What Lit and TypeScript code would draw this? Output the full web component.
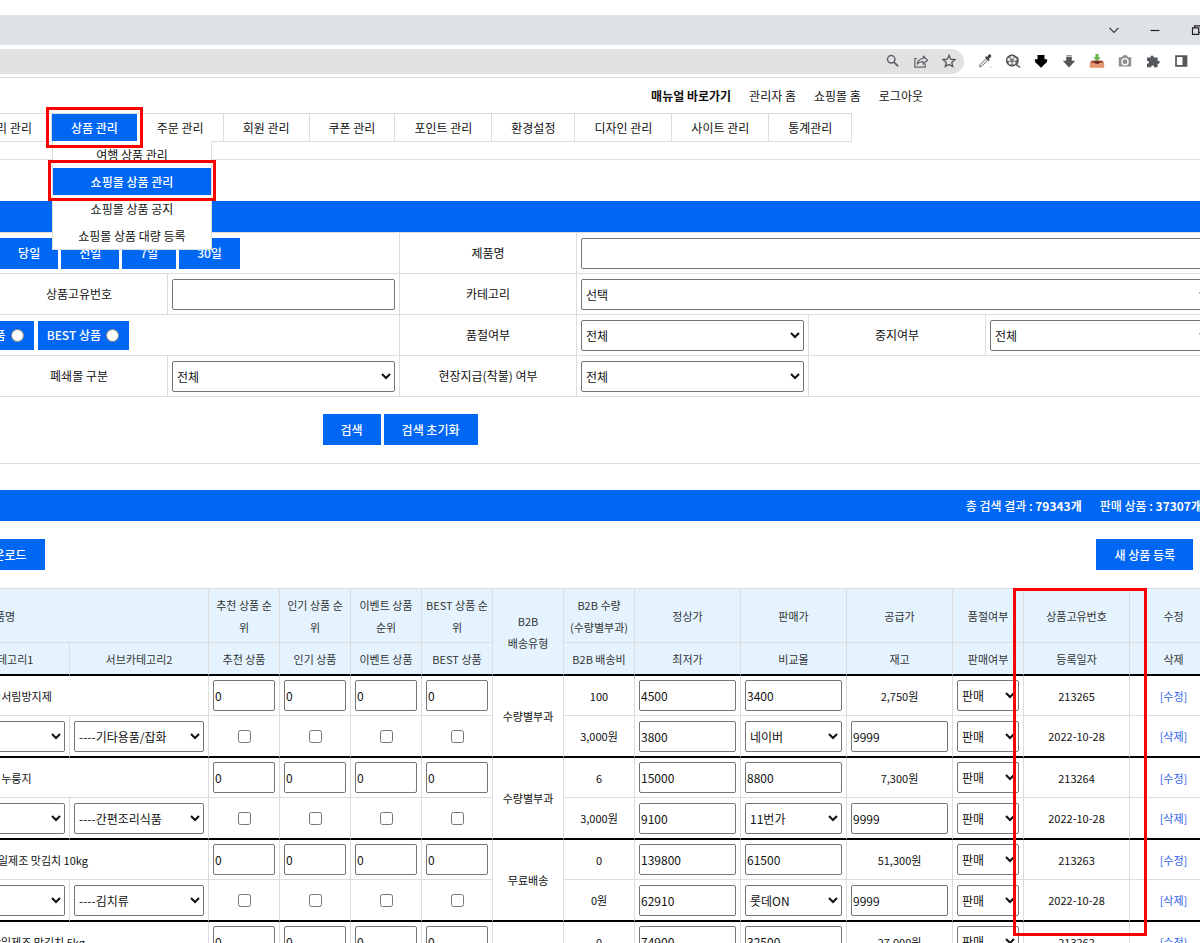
import { LitElement, html, css, svg, nothing } from "lit";
import { customElement } from "lit/decorators.js";

interface Product {
  name: string;
  sub: string;
  delivery: string;
  qty: string;
  fee: string;
  price: string;
  lowest: string;
  sale: string;
  mall: string;
  supply: string;
  stock: string;
  id: string;
  date: string;
}

const products: Product[] = [
  { name: "자동차용 김서림방지제", sub: "----기타용품/잡화", delivery: "수량별부과", qty: "100", fee: "3,000원", price: "4500", lowest: "3800", sale: "3400", mall: "네이버", supply: "2,750원", stock: "9999", id: "213265", date: "2022-10-28" },
  { name: "구수한 누룽지", sub: "----간편조리식품", delivery: "수량별부과", qty: "6", fee: "3,000원", price: "15000", lowest: "9100", sale: "8800", mall: "11번가", supply: "7,300원", stock: "9999", id: "213264", date: "2022-10-28" },
  { name: "국내산 절임배추 당일제조 맛김치 10kg", sub: "----김치류", delivery: "무료배송", qty: "0", fee: "0원", price: "139800", lowest: "62910", sale: "61500", mall: "롯데ON", supply: "51,300원", stock: "9999", id: "213263", date: "2022-10-28" },
  { name: "국내산 절임배추 당일제조 맛김치 5kg", sub: "----김치류", delivery: "무료배송", qty: "0", fee: "0원", price: "74900", lowest: "33700", sale: "32500", mall: "롯데ON", supply: "27,000원", stock: "9999", id: "213262", date: "2022-10-28" },
];

const ranks = ["추천 상품", "인기 상품", "이벤트 상품", "BEST 상품"];

const menu = ["카테고리 관리", "상품 관리", "주문 관리", "회원 관리", "쿠폰 관리", "포인트 관리", "환경설정", "디자인 관리", "사이트 관리", "통계관리"];
const submenu = ["여행 상품 관리", "쇼핑몰 상품 관리", "쇼핑몰 상품 공지", "쇼핑몰 상품 대량 등록"];

const icons = {
  search: svg`<g fill="none" stroke="#5f6368" stroke-width="1.5"><circle cx="7.2" cy="7.3" r="3.7"/><path d="M10 10.2l4.2 4.2" stroke-width="1.8"/></g>`,
  share: svg`<g fill="none" stroke="#5f6368" stroke-width="1.2"><path d="M5 6.5H2.8v8.7h10.4v-3.4"/><path d="M5.2 12c.5-3.600 2.600-5.300 6-5.500V4l4.300 4.200-4.300 4V9.700c-2.600-.1-4.500.5-6 2.300z" stroke-linejoin="round"/></g>`,
  star: svg`<path d="M9 3.300l1.750 3.900 4.200.4-3.200 2.800.95 4.150L9 12.400l-3.700 2.150.95-4.150-3.200-2.800 4.200-.4z" fill="none" stroke="#4f5358" stroke-width="1.300"/>`,
  dropper: svg`<path d="M3.500 14.800l.5-2.200 6-6 1.700 1.700-6 6z" fill="#e8e8e8" stroke="#777" stroke-width="1"/><path d="M9 5.300l1-1 1.200.6 1.500-2.200c1-1.200 3.400.8 2.300 2.200l-2.100 1.700.6 1.300-1 1z" fill="#3c4043"/><rect x="14.500" y="14.800" width="1" height="1" fill="#888"/>`,
  film: svg`<circle cx="8" cy="8.500" r="6" fill="#777"/><circle cx="8" cy="8.500" r="5.400" fill="none" stroke="#444"/><g fill="#eee"><circle cx="8" cy="5.200" r="1.500"/><circle cx="11" cy="7.300" r="1.500"/><circle cx="10" cy="11" r="1.500"/><circle cx="6.200" cy="11" r="1.500"/><circle cx="4.900" cy="7.400" r="1.500"/></g><path d="M13 5c1.500 2 1.500 5-.5 8l3.700 2.300" fill="none" stroke="#666" stroke-width="1.500"/>`,
  heavyDown: svg`<path d="M5.500 3h7v4.200H15.200L15 10l-6 5.800L3 10 2.800 7.200h2.700z" fill="#000"/>`,
  down: svg`<path d="M6.200 3h5.600v1.200H6.200z" fill="#999"/><path d="M6.200 4.700h5.600v4h3.400L9 15.400 2.800 8.700h3.400z" fill="#555"/>`,
  tray: svg`<path d="M7.500 2h3v3.200h2.300L9 9.200 5.200 5.200h2.300z" fill="#67b346"/><path d="M3.500 8.500h11l1.700 3H1.800z" fill="#a85a42"/><path d="M1.800 11h14.400v4.800H1.800z" fill="#e3966f"/><path d="M6 9h6v1.800c-1.500 1.500-4.500 1.500-6 0z" fill="#6e2a1e"/>`,
  camera: svg`<path d="M2.800 5.200h3l1.400-1.900h3.600l1.400 1.900h3v9.400H2.800z" fill="#8e8e8e"/><circle cx="9" cy="9.800" r="3.100" fill="#8e8e8e" stroke="#fff" stroke-width="1.300"/>`,
  puzzle: svg`<path d="M3 5.600h3.700c-1-2.800 3.600-2.800 2.900 0h4v3.200c2.900-.7 2.900 3.500 0 2.900v3.600H10c.5-2.500-3.200-2.500-2.800 0H3v-3.700c2.600.4 2.600-3 0-2.700z" fill="#54575b"/>`,
  panel: svg`<path d="M4 4.200h10.500v9.600H4z" fill="#fff" stroke="#54575b" stroke-width="1.700"/><path d="M10.500 4h4v10h-4z" fill="#54575b"/>`,
  chevron: svg`<path d="M4.500 6.800L9 11.500l4.500-4.700" fill="none" stroke="#333" stroke-width="1.100"/>`,
  minimize: svg`<path d="M4.500 9.500h9" stroke="#222" stroke-width="1.200"/>`,
  restore: svg`<path d="M5.500 6.800h6.200v6.600H5.500zM7.600 6.500V4.800h6.200v6.600H12" fill="none" stroke="#222" stroke-width="1.200"/>`,
};

@customElement("app-root")
export class AppRoot extends LitElement {
  static styles = css`
    :host {
      display: block;
      height: 100vh;
      overflow: hidden;
      background: #fff;
      color: #111;
      font: 12px/18px "Noto Sans CJK KR", "Noto Sans", sans-serif;
    }
    * { box-sizing: border-box; }
    a { color: inherit; text-decoration: none; }
    button, input, select { font: inherit; color: inherit; margin: 0; }

    .tabs {
      display: flex;
      justify-content: flex-end;
      align-items: center;
      gap: 23px;
      height: 30px;
      margin-top: 15px;
      background: #dee1e6;
      overflow: hidden;
    }
    .tabs .icon:last-child { margin-right: -5px; }
    .toolbar {
      display: flex;
      align-items: center;
      gap: 10px;
      height: 33px;
      padding-right: 10px;
      border-bottom: 1px solid #dcdcdc;
    }
    .address {
      flex: 1;
      display: flex;
      justify-content: flex-end;
      align-items: center;
      gap: 10px;
      height: 25px;
      margin-right: 2px;
      padding-right: 6px;
      background: #e2e2e2;
      border-radius: 0 13px 13px 0;
    }
    .icon {
      flex: none;
      width: 18px;
      height: 18px;
      padding: 0;
      border: 0;
      background: none;
    }
    .icon svg { display: block; width: 18px; height: 18px; }

    .utility {
      display: flex;
      justify-content: flex-end;
      gap: 18px;
      padding: 9px 277px 8px 0;
    }
    .utility .strong { font-weight: 700; }
    .header { border-bottom: 1px solid #e0e0e0; padding-bottom: 17px; }
    .menu {
      display: flex;
      margin: 0 0 0 -56px;
      padding: 0;
      list-style: none;
    }
    .entry {
      position: relative;
      border: 1px solid #ddd;
      border-left-width: 0;
    }
    .entry > a { display: block; padding: 0 19px; line-height: 27px; }
    .entry.active { border-right-color: #fff; }
    .entry.active > a { background: #0067f4; color: #fff; font-weight: 500; }
    .dropdown {
      position: absolute;
      z-index: 2;
      top: 27px;
      left: 0;
      width: 160px;
      margin: 0;
      padding: 0;
      list-style: none;
      background: #fff;
      border: 1px solid #ddd;
      border-top: 0;
      text-align: center;
    }
    .dropdown a { display: block; line-height: 27px; }
    .dropdown .current { position: relative; background: #0067f4; color: #fff; font-weight: 500; }
    .mark {
      position: absolute;
      z-index: 3;
      border: 3px solid #f00;
      pointer-events: none;
    }
    .mark.tab { inset: -7px -6px; }
    .mark.item { inset: -8px -5px -6px; }
    .mark.column { top: 0; right: 71px; width: 134px; height: 348px; }

    .content { margin: 41px -18px 0 -418px; }
    .bar {
      display: flex;
      justify-content: flex-end;
      align-items: center;
      gap: 18px;
      height: 31px;
      padding-right: 16px;
      background: #0067f4;
      color: #fff;
      font-weight: 500;
    }
    .bar b { font-weight: 700; }
    .btn {
      height: 31px;
      padding: 0 18px;
      border: 0;
      background: #0067f4;
      color: #fff;
      font-weight: 500;
      white-space: nowrap;
    }

    table { width: 100%; border-collapse: separate; border-spacing: 0; table-layout: fixed; }
    th { font-weight: 400; }
    th, td { padding: 0 4px; border: 0 solid #ddd; border-width: 0 1px 1px 0; text-align: center; }
    .label { width: 177px; }
    .field { width: 232px; }
    .search { border-top: 1px solid #ddd; }
    .search th, .search td { height: 41px; }
    .box {
      display: block;
      width: 100%;
      height: 31px;
      border: 1px solid #767676;
      border-radius: 2px;
      background: #fff;
      padding: 0 1px;
    }
    select.box { padding: 0; }
    .dates, .flags { display: flex; gap: 3px; }
    .dates .box { width: 85px; }
    .flags { gap: 4px; }
    .flag {
      display: flex;
      align-items: center;
      gap: 5px;
      height: 29px;
      padding: 0 10px 0 9px;
      background: #0067f4;
      color: #fff;
      font-weight: 500;
      white-space: nowrap;
    }
    .flag input { width: 13px; height: 13px; }
    .actions {
      display: flex;
      justify-content: center;
      gap: 3px;
      padding: 17px 0 18px;
      margin-bottom: 26px;
      border-bottom: 1px solid #ddd;
    }
    .tools { display: flex; gap: 3px; padding: 18px 25px; }
    .tools .new { margin-left: auto; }

    .list { position: relative; }
    .goods { border-top: 1px solid #ddd; font-size: 11px; line-height: 22px; }
    .goods thead { background: #e5f3ff; color: #333; }
    .goods thead th { padding: 0 3px; }
    .goods .top th { height: 54px; }
    .goods .bottom th { height: 33px; }
    .goods .bottom th, .goods .top .tall, .goods .second td, .goods .first .tall { border-bottom: 2px solid #000; }
    .goods .first td { height: 40px; }
    .goods .second td { height: 42px; }
    .goods .box { font-size: 12px; }
    .goods .check { display: block; width: 13px; height: 13px; margin: 0 auto; }
    .goods a { color: #2d62ee; }
    .c-71 { width: 71px; }
    .c-106 { width: 106px; }
    .c-139 { width: 139px; }
  `;

  private icon(name: keyof typeof icons, label: string) {
    return html`<button class="icon" type="button" aria-label=${label}><svg viewBox="0 0 18 18">${icons[name]}</svg></button>`;
  }

  private select(label: string, value: string) {
    return html`<select class="box" aria-label=${label}><option>${value}</option></select>`;
  }

  private input(label: string, value: string) {
    return html`<input class="box" type="text" aria-label=${label} .value=${value} />`;
  }

  private labelCell(id: string, text: string) {
    return html`<th scope="row"><label for=${id}>${text}</label></th>`;
  }

  private renderBrowser() {
    return html`
      <div class="tabs">
        ${this.icon("chevron", "탭 검색")} ${this.icon("minimize", "최소화")} ${this.icon("restore", "이전 크기로")}
      </div>
      <div class="toolbar">
        <div class="address">${this.icon("search", "확대")} ${this.icon("share", "공유")} ${this.icon("star", "북마크")}</div>
        ${this.icon("dropper", "색상 추출")} ${this.icon("film", "동영상")} ${this.icon("heavyDown", "다운로드")}
        ${this.icon("down", "내려받기")} ${this.icon("tray", "저장")} ${this.icon("camera", "캡처")}
        ${this.icon("puzzle", "확장 프로그램")} ${this.icon("panel", "측면 패널")}
      </div>
    `;
  }

  private renderHeader() {
    return html`
      <header class="header">
        <div class="utility">
          <a class="strong" href="#">매뉴얼 바로가기</a><a href="#">관리자 홈</a><a href="#">쇼핑몰 홈</a><a href="#">로그아웃</a>
        </div>
        <nav>
          <ul class="menu">
            ${menu.map((name, i) => html`
              <li class="entry ${i === 1 ? "active" : ""}">
                <a href="#">${name}</a>
                ${i === 1 ? html`
                  <ul class="dropdown">
                    ${submenu.map((item, n) => html`<li><a class=${n === 1 ? "current" : ""} href="#">${item}${n === 1 ? html`<span class="mark item"></span>` : nothing}</a></li>`)}
                  </ul>
                  <span class="mark tab"></span>` : nothing}
              </li>`)}
          </ul>
        </nav>
      </header>
    `;
  }

  private renderSearch() {
    return html`
      <div class="bar"></div>
      <table class="search">
        <colgroup>
          <col class="label" /><col class="field" /><col class="label" /><col class="field" />
          <col class="label" /><col class="field" /><col class="label" /><col />
        </colgroup>
        <tr>
          ${this.labelCell("from", "등록일")}
          <td colspan="3">
            <div class="dates">
              <input class="box" id="from" type="text" /><input class="box" type="text" aria-label="종료일" />
              ${["전체", "당일", "전일", "7일", "30일"].map((t) => html`<button class="btn" type="button">${t}</button>`)}
            </div>
          </td>
          ${this.labelCell("name", "제품명")}
          <td colspan="3"><input class="box" id="name" type="text" /></td>
        </tr>
        <tr>
          ${this.labelCell("seller", "판매자")}
          <td><input class="box" id="seller" type="text" /></td>
          ${this.labelCell("code", "상품고유번호")}
          <td><input class="box" id="code" type="text" /></td>
          ${this.labelCell("category", "카테고리")}
          <td colspan="3"><select class="box" id="category"><option>선택</option></select></td>
        </tr>
        <tr>
          <th scope="row">상품 구분</th>
          <td colspan="3">
            <div class="flags">
              ${ranks.map((r) => html`<label class="flag">${r}<input type="radio" name="rank" /></label>`)}
            </div>
          </td>
          ${this.labelCell("soldout", "품절여부")}
          <td><select class="box" id="soldout"><option>전체</option></select></td>
          ${this.labelCell("stopped", "중지여부")}
          <td><select class="box" id="stopped"><option>전체</option></select></td>
        </tr>
        <tr>
          ${this.labelCell("shipping", "배송유형")}
          <td><select class="box" id="shipping"><option>전체</option></select></td>
          ${this.labelCell("closed", "폐쇄몰 구분")}
          <td><select class="box" id="closed"><option>전체</option></select></td>
          ${this.labelCell("onsite", "현장지급(착불) 여부")}
          <td><select class="box" id="onsite"><option>전체</option></select></td>
          <td colspan="2"></td>
        </tr>
      </table>
      <div class="actions">
        <button class="btn" type="button">검색</button><button class="btn" type="button">검색 초기화</button>
      </div>
    `;
  }

  private renderProduct(p: Product) {
    return html`
      <tr class="first">
        <td class="tall" rowspan="2"></td>
        <td class="tall" rowspan="2"></td>
        <td colspan="3">${p.name}</td>
        ${ranks.map((r) => html`<td>${this.input(r + " 순위", "0")}</td>`)}
        <td class="tall" rowspan="2">${p.delivery}</td>
        <td>${p.qty}</td>
        <td>${this.input("정상가", p.price)}</td>
        <td>${this.input("판매가", p.sale)}</td>
        <td>${p.supply}</td>
        <td>${this.select("품절여부", "판매")}</td>
        <td>${p.id}</td>
        <td><a href="#">[수정]</a></td>
      </tr>
      <tr class="second">
        <td>${this.select("카테고리", "식품")}</td>
        <td>${this.select("서브카테고리1", "선택")}</td>
        <td>${this.select("서브카테고리2", p.sub)}</td>
        ${ranks.map((r) => html`<td><input class="check" type="checkbox" aria-label=${r} /></td>`)}
        <td>${p.fee}</td>
        <td>${this.input("최저가", p.lowest)}</td>
        <td>${this.select("비교몰", p.mall)}</td>
        <td>${this.input("재고", p.stock)}</td>
        <td>${this.select("판매여부", "판매")}</td>
        <td>${p.date}</td>
        <td><a href="#">[삭제]</a></td>
      </tr>
    `;
  }

  private renderList() {
    return html`
      <div class="bar">
        <span>총 검색 결과 : <b>79343개</b></span><span>판매 상품 : <b>37307개</b></span>
      </div>
      <div class="tools">
        ${["전체선택", "선택수정", "선택삭제", "순위저장", "엑셀 다운로드"].map((t) => html`<button class="btn" type="button">${t}</button>`)}
        <button class="btn new" type="button">새 상품 등록</button>
      </div>
      <div class="list">
        <table class="goods">
          <colgroup>
            <col class="c-71" /><col class="c-139" /><col class="c-139" /><col class="c-139" /><col class="c-139" />
            <col class="c-71" /><col class="c-71" /><col class="c-71" /><col class="c-71" /><col class="c-71" /><col class="c-71" />
            <col class="c-106" /><col class="c-106" /><col class="c-106" /><col class="c-71" /><col class="c-106" /><col />
          </colgroup>
          <thead>
            <tr class="top">
              <th class="tall" rowspan="2">번호</th>
              <th class="tall" rowspan="2">이미지</th>
              <th colspan="3">상품명</th>
              ${ranks.map((r) => html`<th>${r} 순위</th>`)}
              <th class="tall" rowspan="2">B2B<br />배송유형</th>
              <th>B2B 수량<br />(수량별부과)</th>
              <th>정상가</th><th>판매가</th><th>공급가</th><th>품절여부</th><th>상품고유번호</th><th>수정</th>
            </tr>
            <tr class="bottom">
              <th>카테고리</th><th>서브카테고리1</th><th>서브카테고리2</th>
              ${ranks.map((r) => html`<th>${r}</th>`)}
              <th>B2B 배송비</th>
              <th>최저가</th><th>비교몰</th><th>재고</th><th>판매여부</th><th>등록일자</th><th>삭제</th>
            </tr>
          </thead>
          <tbody>
            ${products.map((p) => this.renderProduct(p))}
          </tbody>
        </table>
        <span class="mark column"></span>
      </div>
    `;
  }

  render() {
    return html`
      ${this.renderBrowser()}
      ${this.renderHeader()}
      <main class="content">${this.renderSearch()} ${this.renderList()}</main>
    `;
  }
}
